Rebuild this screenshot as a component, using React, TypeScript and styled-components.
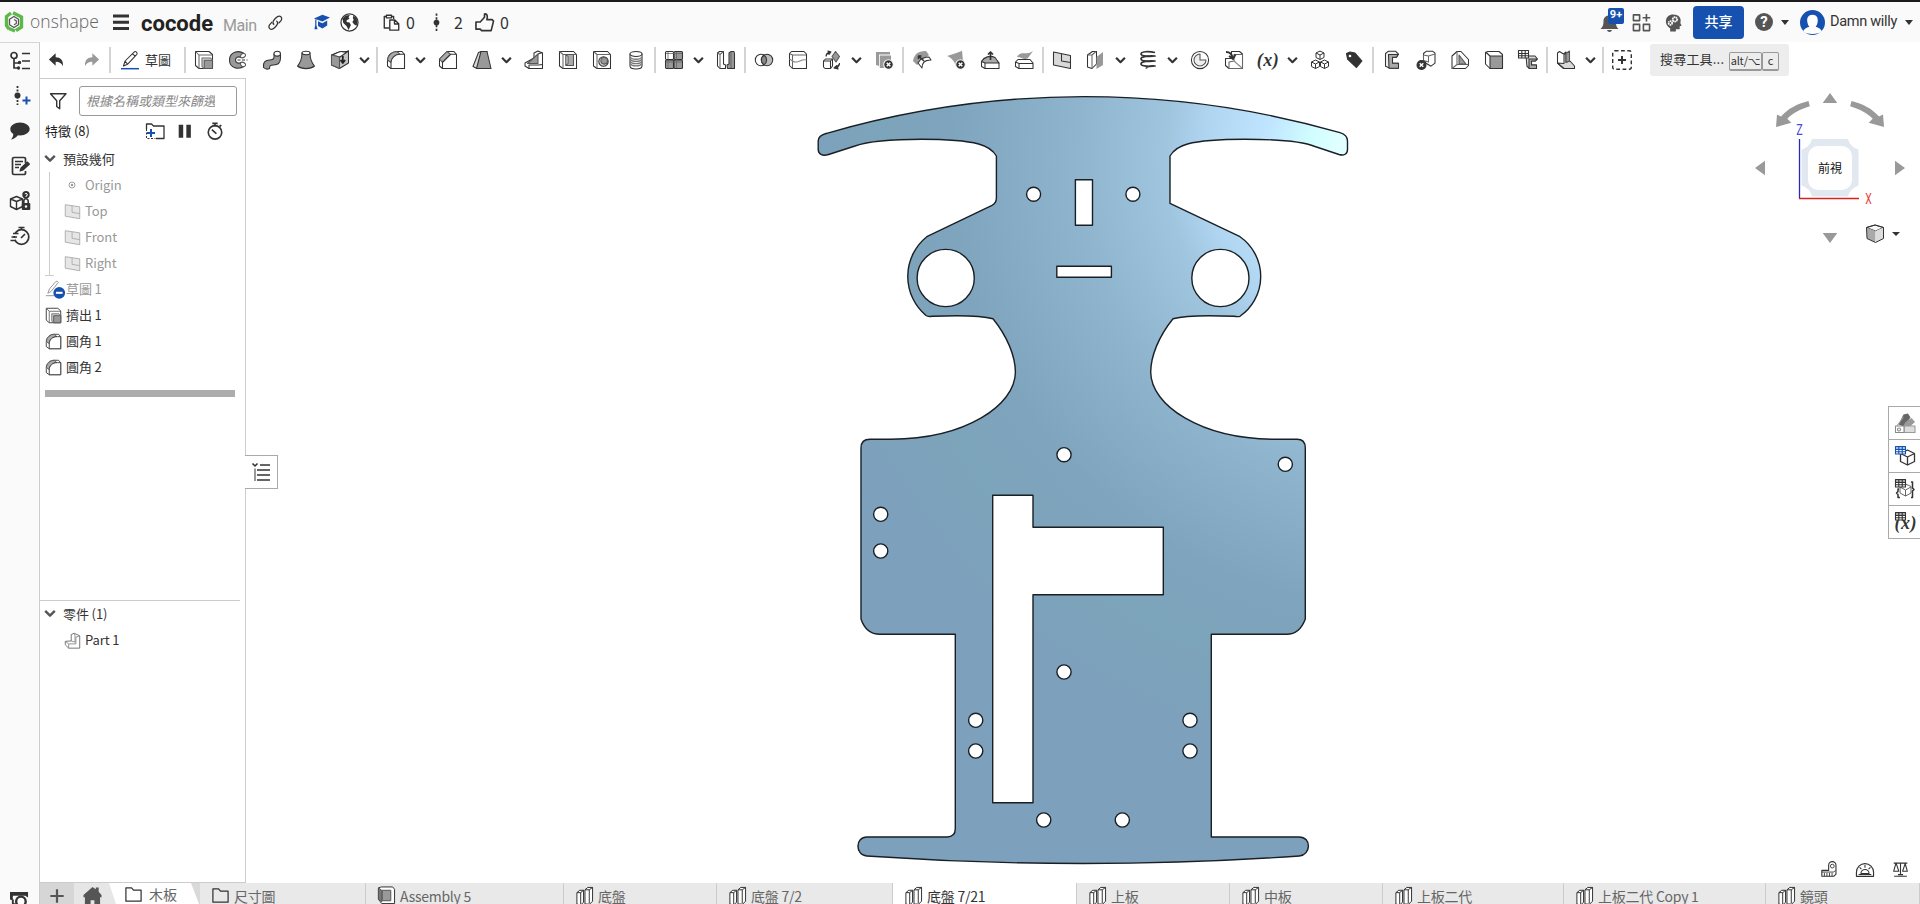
import React from 'react';
import styled, { createGlobalStyle } from 'styled-components';

const Global = createGlobalStyle`
  * { box-sizing: border-box; }
  body { margin: 0; background: #fff; overflow: hidden; }
`;

const INK = '#333';
const GREY = '#999';
const PALE = '#d9d9d9';
const BLUE = '#1651b0';

/* ---------- icons ---------- */
const Glyph = styled.svg<{ $w?: number; $h?: number }>`
  width: ${p => p.$w ?? 20}px;
  height: ${p => p.$h ?? p.$w ?? 20}px;
  flex: none;
  display: block;
  fill: none;
  stroke: ${INK};
  stroke-width: 1.05;
  stroke-linejoin: round;
  overflow: visible;
`;

const table = (color: string, light: string) => (
  <g strokeWidth="1.1" stroke={color}>
    <path fill={light} d="M.5.500h10v3H.5z" />
    <path fill="#fff" d="M.5 3.500h10v4.500H.5z" />
    <path d="M3.800.5v7.500M7.200.5v7.500M.5 5.700h10" />
  </g>
);

const art: Record<string, React.ReactNode> = {
  undo: <path stroke="none" fill={INK} d="M8.500 2.500v4.500c5 0 9 3 8 10-1.300-3.300-3.500-5-8-5v4.500L1 9.500z" />,
  redo: <path stroke="none" fill={GREY} d="M11.500 2.500v4.500c-5 0-9 3-8 10 1.300-3.300 3.500-5 8-5v4.500l7.500-7z" />,
  pencil: <><path fill="#fff" d="M3.500 16l1.600-5L14.300 1.800q1-.8 2.200.3t.3 2.200L7.500 14.300zM12.500 3.700l2.700 2.700M5.100 11L7.500 14.300" /><path stroke={BLUE} strokeWidth="1.500" d="M1 18.700h18" /></>,
  extrude: <><path fill="#fff" d="M1.500 15.500v-14h13.500l3.500 3v14H5z" /><path stroke="#666" d="M5 18.500V5h13.500M1.500 1.500L5 5" /><path stroke="#666" fill={PALE} d="M8 16.500V8h8.500l2 2v8.500H10z" /><path stroke="#555" fill={GREY} d="M10.200 10.200h8.300v8.300h-8.300z" /></>,
  revolve: <><path fill={GREY} d="M16 3.500C11 0 1.500 1.500 1.500 10S11 20 16.500 16l-3.500-3.500c-3 1.500-5.500 0-5.500-2.500s2.500-4 5.500-2.500z" /><path fill="#fff" stroke="#555" d="M12.500 6.500c0-2 1.500-3.500 3.500-3s2 2.500.5 3.500-4 1.500-4-.5zM12.500 13.500c0 2 1.500 3.500 3.500 3s2-2.500.5-3.500-4-1.500-4 .5z" /><path strokeDasharray="3 1.500" d="M9.500 10h10" /></>,
  sweep: <><path fill={GREY} d="M1.500 17.500c-1-5 2-7.500 6-7.500 3.500 0 4.500-1 4.500-3V4h6.500v4c0 5-3 7-7 7-3 0-4 .5-4 3.500-2 1-4.500.5-6-1z" /><ellipse fill="#fff" cx="15.200" cy="3.700" rx="3.300" ry="2.400" /></>,
  loft: <><path fill={GREY} d="M6 3c0 6-1 9-4.500 13 4 3.500 13 3.500 17 0C15 12 14 9 14 3z" /><ellipse fill="#fff" cx="10" cy="3" rx="4" ry="1.700" /></>,
  thicken: <><path fill="#c4c4c4" d="M1.500 5c4-.500 7-4 10-3.500s5 1 7-.5V13L9.500 18.500l-8-3.500z" /><path fill="#fff" d="M1.500 5c4-.500 7-4 10-3.500s5 1 7-.5L10 7z" /><path fill={GREY} stroke="#555" d="M1.500 5L9.500 7v11.500l-8-3.500z" /><path strokeWidth="1.800" stroke="#222" d="M12.800 6v6.500M10.500 10l2.300 3 2.300-3" /></>,
  fillet: <><path fill="#fff" d="M1.500 16v-5C1.500 5 6 1.500 11 1.500h5l2.500 3v14H5z" /><path fill="#aaa" stroke="#555" d="M1.500 10C2 5 6 1.500 11 1.500L14 4.300C9 4.300 5.500 7.500 5 12.500z" /><path d="M5 18.500V13c0-5 3.500-8.700 9.500-8.700h4v14.200z" fill="#fff" /></>,
  chamfer: <><path fill="#fff" d="M1.500 16v-7L9 1.500h7l2.500 3v14H4.500z" /><path fill="#aaa" stroke="#555" d="M1.500 9L9 1.500l3.500 2.800-8 8z" /><path d="M4.500 18.500V12.300l8-8h6" /></>,
  draft: <><path fill={PALE} d="M1 16.500L6.500 2.500 9 1.500h6l-6 17H5z" /><path fill={GREY} d="M9 1.500h6l4 17H4.500z" /></>,
  rib: <><path fill="#fff" d="M1 13l9-5V3l4-2 4.500 2v15.500H5L1 16z" /><path fill={GREY} stroke="#555" d="M3.500 13.500L14 4v9.500z" /><path d="M14 4l4.500-1.500M5 18.500V15h9.500l4-.5" /></>,
  shell: <><path fill="#fff" d="M1.500 16v-14.500h14l3 3v14H5z" /><path stroke="#666" d="M1.500 1.500L5 4.500v14M5 4.500h13.500" /><path fill="#aaa" stroke="#555" d="M8 4.500h7.500v11H8z" /><path fill="#fff" stroke="#555" d="M8 4.500l2 2v7L8 15.500z" /></>,
  hole: <><path fill="#fff" d="M1.500 16v-14.500h14l3 3v14H5z" /><path stroke="#666" d="M1.500 1.500L5 4.500v14M5 4.500h13.500" /><circle fill={PALE} cx="11.500" cy="11.500" r="4.700" /><circle fill={GREY} stroke="#555" cx="12.200" cy="10.800" r="3.300" /></>,
  thread: <><path fill="#fff" d="M4 4v12c0 4 12 4 12 0V4z" /><ellipse fill="#fff" cx="10" cy="4" rx="6" ry="2.500" /><path stroke="#777" strokeWidth="1.300" d="M4 7c2 3 10 3 12 0M4 9.200c2 3 10 3 12 0M4 11.400c2 3 10 3 12 0M4 13.600c2 3 10 3 12 0" /></>,
  pattern: <><rect fill="#fff" x="1.500" y="1.500" width="8" height="8" rx="1" /><rect fill={GREY} x="10" y="1.500" width="8.500" height="8" rx="1" /><rect fill={GREY} x="1.500" y="10" width="8" height="8.500" rx="1" /><rect fill={GREY} x="10" y="10" width="8.500" height="8.500" rx="1" /><path d="M2 3.500h16M4 2v7M12.500 2v16M4 10v8M2 12h16" stroke="#666" strokeWidth=".8" /></>,
  mirror: <><path fill="#fff" d="M1.500 16V3l2-1.500h4V14l2 1v3.500H4z" /><path stroke="#666" d="M4 18.500V4.500l3.500-3M1.500 3L4 4.500" /><path fill={GREY} d="M18.500 4v14.500h-7L11 15l2-1V3l2-1.500h3z" /><path stroke="#666" d="M15 1.500V18" /></>,
  boolean: <><circle fill="#fff" cx="7" cy="10" r="5.700" /><circle fill="#bbb" cx="13" cy="10" r="5.700" /><path fill="#888" d="M10 5.200a5.700 5.700 0 0 1 0 9.600 5.700 5.700 0 0 1 0-9.600z" /></>,
  split: <><path fill="#fff" d="M1.500 15.500V3.500l2-2h12.500l2.500 2.500v14.500H4.500z" /><path stroke="#666" d="M1.500 3.500L4.500 5H18M4.500 5v13.500" /><path stroke="#888" d="M1.500 9l3 2c6 4 8-3 14-1" /></>,
  transform: <><path fill="#fff" d="M1.500 17v-6l2-2h7v7l-2 2.500H3z" /><path d="M1.500 11h7v7.500M8.500 11l2-2" /><path fill={GREY} stroke="#555" d="M13.500 1.500l4 5-3.500 5.500-4-5.500z" /><path fill={INK} d="M4 6.500C4 4 5 3 7 2.500M6 1l3 1-2 2.500zM17.500 13c0 3-1 4-3.500 4.500M15 15.500L12 18l4 1z" /></>,
  deletePart: <><path stroke="none" fill={GREY} d="M2 2h14v2.500H5V16L2 15zM5.800 5.500H17V11h-6v7H5.800z" /><circle fill={INK} cx="14.500" cy="14.500" r="4.800" stroke="#fff" /><path stroke="#fff" strokeWidth="1.500" d="M12.700 12.700l3.600 3.600M16.300 12.700l-3.600 3.600" /></>,
  modifyFillet: <><path stroke="none" fill={GREY} d="M1 11C2 4 7 .5 14 1L17 5 5 15z" /><path fill="#fff" d="M10 18c0-5 2-8 9-8l-2-3c-5 0-6 2-8 2l-3 4z" /><path strokeWidth="1.600" d="M12 11L6.500 6M6.500 9V6h3" /></>,
  deleteFace: <><path stroke="none" fill={GREY} d="M1 6l8-2.500c4-1.500 6-2 7-3L17 11l-7 6C9 12 6 8 1 6z" /><circle fill={INK} cx="14.500" cy="14.500" r="4.800" stroke="#fff" /><path stroke="#fff" strokeWidth="1.500" d="M12.700 12.700l3.600 3.600M16.300 12.700l-3.600 3.600" /></>,
  moveFace: <><path fill="#fff" d="M1.500 11.500L5 9h10l4 4v5.500H5l-3.500-2z" /><path fill="#aaa" d="M1.500 11.500C4 7 10 5 15 7.500L19 13H5z" /><path d="M5 13v5.500" /><path strokeWidth="1.700" d="M10.500 10V2M8 4.500L10.500 2 13 4.500" /></>,
  replaceFace: <><path stroke="none" fill={GREY} d="M3 7c4-7 9-1 16-6l-5 7c-4 3-6-1-11-1z" /><path fill="#fff" d="M1.500 12L4 9.500h12l3 3.500v5.500H5l-3.500-2z" /><path d="M1.500 12L5 13.500h14M5 13.500v5" /></>,
  plane: <><path fill={PALE} d="M1.500 2l17 3.500v13l-17-3.500z" /><path d="M9.500 4v7l9 1.500" /></>,
  frame: <><path fill="#fff" d="M1.500 17V5l5-3.500h4V14L6 18.500z" /><path stroke="#666" d="M6 18V5l4-3.500M1.500 5H6" /><path stroke="none" fill={GREY} d="M10.500 7l6.500-5v13l-6.500 4z" /></>,
  helix: <><g strokeWidth="1.700"><path d="M17 2.500C10 1 3 1.500 3 4s9 2.500 14 2C10 5.500 3 6.500 3 9s9 2.500 14 2C10 10.500 3 11.500 3 14s9 2.500 14 2c-3-.5-8 0-9 2.500" /></g></>,
  clock: <><circle cx="10" cy="10" r="8.600" fill="#fff" /><path fill="#eee" stroke="#555" d="M10 4a6 6 0 1 0 6 6h-6z" /></>,
  derive: <><path fill="#fff" d="M1.500 15.500V8.500h6V1.500h8l3 2.500v14.500H5z" /><path fill="#fff" stroke="#666" d="M5 18.500V12l5-1V4.500h8.500v14z" /><path stroke="#888" d="M10 11l8 7" /><path strokeWidth="1.900" d="M2 2c4 0 6 2 6.500 6M5 6l4 3 2.500-4.500" /></>,
  cubes: <><g fill="#fff" strokeWidth="1"><path d="M10 1l4 2v4.500l-4 2-4-2V3zM6 3l4 2 4-2M10 5v4.500" /><path d="M5.500 10l4 2v4.500l-4 2-4-2V12zM1.500 12l4 2 4-2M5.500 14v4.500" /><path d="M14.500 10l4 2v4.500l-4 2-4-2V12zM10.500 12l4 2 4-2M14.500 14v4.500" /></g></>,
  tag: <><path fill={INK} d="M2.500 3.500L6 2l5 1 7 8-5.500 6.500L3.500 9z" /><circle cx="6" cy="6" r="1.300" fill="#fff" stroke="none" /></>,
  sheet1: <><path fill="#eee" d="M3.500 3.500l3-2.300h7l3 3-2 3h-4v6h6v5H8l-4.500-2z" /><path fill="#aaa" d="M6.500 4.500h9.500l-1.500 2.700h-4v6h6v5h-9.500z" /></>,
  sheet2: <><path fill="#fff" d="M7.500 8V3.500l3-2.300h6l2.500 2v10l-4 3-5-3z" /><path fill="#fff" stroke="#666" d="M7.500 5L12.500 6V12L7.500 10.500zM12.500 6L19 4" /><circle cx="5.500" cy="15" r="4.500" fill={INK} /><path stroke="#fff" strokeWidth="1.400" d="M3.700 13.200l3.600 3.600M7.300 13.200l-3.600 3.600" /></>,
  sheet3: <><path fill="#fff" d="M2 18.500V6l5-4.500h4l7.500 8v6l-3 3z" /><path stroke="#666" d="M7 1.500v13h11.500M2 18.500l5-4" /><path fill={GREY} stroke="#555" d="M9 5l7 9H9z" /></>,
  sheet4: <><path fill="#fff" d="M1.500 14V2.500l2.500-1h11l3.500 3V18.500H6z" /><path fill={GREY} d="M6 6h12.500v12.500H6z" /><path d="M1.500 2L6 6" /></>,
  sheet5: <><path fill={PALE} d="M8 6h9l2.500 3-2 2h-4v4h5v3.500h-6.500l-3-2z" /><path fill="#aaa" d="M11 9h8l-1.500 2h-4v4h5v3.500H11z" />{table(INK, '#fff')}</>,
  bend: <><path fill="#fff" d="M1.500 13V3l2-1.500 4 2.500 2.500-2V13l-2.500 5.500z" /><path fill={PALE} d="M8 13.500V5l2-2v9l4-1 4.500 5v2.500H8l-6.500-5.500z" /><path fill={GREY} stroke="#555" d="M10 12.500V3.500L13.500 1v10z" /></>,
  addTool: <><rect x=".7" y=".7" width="18.600" height="18.600" rx="2" strokeDasharray="3.800 2.500" strokeWidth="1.400" /><path strokeWidth="2" d="M10 6v8M6 10h8" /></>,
  tree: <><circle cx="4" cy="4.500" r="3" strokeWidth="1.700" /><path strokeWidth="1.700" d="M4 7.500v9.500h5M4 12h5M12 2.500h8M12 10h8M12 17.500h8" /><circle cx="9.500" cy="11.500" r="1.200" fill={INK} /><circle cx="8.500" cy="17" r="1.200" fill={INK} /></>,
  version: <><circle cx="7.500" cy="9.500" r="3" fill={INK} stroke="none" /><path strokeWidth="1.800" strokeDasharray="2 1.500" d="M7.500 0v19" /><path stroke={BLUE} strokeWidth="2" d="M16.500 10.500v8M12.500 14.500h8" /></>,
  comment: <path fill={INK} stroke="none" d="M10 1.500c5.500 0 9.700 3 9.700 6.500S15.500 14.500 10 14.500l-2-.2C6 16.500 4 18 1 18.500 2.500 17 3.300 15 3.300 13 1.500 12 .3 10 .3 8 .3 4.500 4.500 1.500 10 1.500z" />,
  note: <><path strokeWidth="1.700" d="M15.500 7V3a1.500 1.500 0 0 0-1.500-1.500H4A1.500 1.500 0 0 0 2.500 3v14A1.500 1.500 0 0 0 4 18.500h10a1.500 1.500 0 0 0 1.500-1.500v-2M5 5.500h8M5 8.500h6M5 11.500h4" /><path fill={INK} d="M10 15l1-3 6.500-6 2 2L13 14z" /></>,
  cubeLock: <><path fill="#fff" strokeWidth="1.400" d="M6.500 5.500l6 2.500v7.500l-6 3-6-3V8zM.5 8l6 2.500L12.500 8M6.500 10.500v8" /><circle cx="16" cy="3.700" r="3.700" fill={INK} stroke="none" /><path stroke="#fff" strokeWidth="1" d="M14.800 3q1.200-1.500 2.300 0t-1.100 2v1" /><path strokeWidth="1.600" d="M13.800 12v-2a2.200 2.200 0 0 1 4.400 0v2" /><rect x="11.800" y="12" width="8.500" height="7" rx="1" fill={INK} stroke="none" /><circle cx="16" cy="15.500" r="1.200" fill="#fff" stroke="none" /></>,
  timer: <><circle cx="11.500" cy="11" r="7.300" strokeWidth="1.700" /><path strokeWidth="1.700" d="M8.500 1.500h6M11.500 1.500V4M11 12l4-4" /><path stroke="#fafafa" strokeWidth="2" d="M1 9h6M0 13h5.500" /><path strokeWidth="1.500" d="M3 7.500h5.500M1.500 11h5.500M.5 14.500h5" /></>,
  camera: <><path fill={INK} stroke="none" d="M0 2h19v6l-3-2H3v5l-3-1z" /><circle cx="11.500" cy="12" r="5" fill="#fff" strokeWidth="2.500" /><path strokeWidth="2" d="M15 16l4 4M3 10v5h3" /></>,
  filter: <path d="M2.500 2.800h15.500l-6.300 7v8l-3-2.300v-5.700z" strokeWidth="1.400" />,
  folderAdd: <><path d="M1.500 8V3h5l2 2h10.500v12.500h-8" strokeWidth="1.300" /><path strokeDasharray="2 1.500" d="M1.500 8v9.500h9" /><path stroke={BLUE} strokeWidth="2" d="M6 8v8M2 12h8" /></>,
  pause: <path fill={INK} stroke="none" d="M3 3h5v14.500H3zM11.500 3h5v14.500h-5z" />,
  stopwatch: <><circle cx="10" cy="11.500" r="7.500" strokeWidth="1.800" /><path strokeWidth="1.800" d="M7 1.500h6M10 2v3M15 5l2-1.500M10.500 12L6.500 8.500M10.500 12l1 1" /></>,
  origin: <><circle cx="10" cy="10" r="3.300" stroke={GREY} /><circle cx="10" cy="10" r="1.300" fill={GREY} stroke="none" /></>,
  planeSoft: <g stroke="#aaa"><path fill="#e6e6e6" d="M1.500 2l17 2.500v14l-17-3z" /><path d="M9.500 3.500v7.500l9 1.500" /></g>,
  sketchOff: <><path stroke={GREY} fill="#fff" d="M3 14l1.600-4.500L11.500 1.500q1.500-.8 2.500 1L6.500 12zM1 16.500h9" /><circle cx="15" cy="13.500" r="6.200" fill={BLUE} stroke="none" /><path stroke="#fff" strokeWidth="2.200" d="M11.500 13.500h7" /></>,
  part: <g stroke="#666"><path fill="#fff" d="M1.500 11l7-.5V3l3.500-1.500 6.500 3v14.500H5.500L1.500 15z" /><path stroke="#888" d="M8.500 10.500L13 12V4.500L12 1.500M5.500 19v-5H14V6l4.500-1.500M1.500 11l4 3" /></g>,
  folder: <path strokeWidth="1.300" d="M2 3h6l2 2.500h8V17H2z" />,
  assembly: <><path fill="#fff" d="M1.500 14V2l3-1h12l2 2.500v15H5z" /><path fill={GREY} stroke="#555" d="M5.500 4.500h9v11h-9z" /><path stroke="#555" fill="#777" d="M1.500 2L5 4.500v12L1.500 14z" /></>,
  studio: <><path fill="#fff" d="M2 19V7l3-2.500h4V17l-3 3zM2 7h4v12M6 7l3-2.500" /><path fill="#fff" d="M10.500 18V4l3-2.500h5V16l-3 3h-5zM10.500 4H15v14M15 4L18.500 1.500" /></>,
  home: <path fill="#555" stroke="none" d="M10 1L.5 9.500V12l1.500-.5V21h6v-6h4v6h6v-9.500l1.500.5V9.500L16.500 6V1.500h-3v2z" />,
  swatches: <><path fill="#666" stroke="none" d="M8.500 1.500l4.500-1 2.500 4-7 9-5-2z" /><path fill="#999" stroke="none" d="M10.500 9l6-4 3.500 4-5 4.500H8z" /><path fill="#ddd" stroke={GREY} d="M9 13h11v6.500H9z" /><path fill="#fff" stroke="#888" d="M.5 13H9v6.500H.5z" /><path stroke={GREY} d="M2 13l6.500-9" /><circle cx="4" cy="16.500" r="1.500" stroke="#888" /></>,
  cubeTable: <><path fill="#fff" strokeWidth="1.300" d="M12.500 4l7 3.500v8l-7 3.500-7-3.500v-8zM5.500 7.500l7 3.500 7-3.500M12.500 11V19" />{table(BLUE, '#9dc4f0')}</>,
  braceTable: <><path fill="#fff" strokeWidth="1" stroke="#666" d="M10.500 5l5.500 2.500V14l-5.500 3L5 14V7.500zM5 8l5.500 3L16 8M10.500 11v6" /><path strokeWidth="1.500" d="M4 10H3v2.500L1.500 14 3 15.500v3h2M16 3h1.500v6L19 10.500 17.500 12v6.500H16" />{table(INK, '#aaa')}</>,
  tape: <><path fill="#fff" strokeWidth="1.300" d="M1 11h8V5a4.300 4.300 0 0 1 8.600 0v10.500L15 18H1z" /><circle cx="13.300" cy="6" r="2.200" /><path d="M1 13h14l2-2M4 14v4M7 14v4M10 14v4M13 14v4" /></>,
  protractor: <><path fill="#fff" strokeWidth="1.300" d="M.5 17v-4.500a9.500 9.500 0 0 1 19 0V17z" /><path strokeWidth="1.200" d="M5.500 14a4.500 4.500 0 0 1 9 0zM3 15h14M10 7.500v-3M6 9L4 7M14 9l2-2" /></>,
  scale: <path strokeWidth="1.300" d="M10 2.500V16M2 2.500h16M4.500 3L2 12h6L5 3M15.500 3L12.500 12h5.500L15.500 3M2.500 18h15M7 16h6" />,
  link: <g strokeWidth="1.500"><path d="M8.500 12.500c-3-2-1-5 1-7s4-4.500 6.500-2.500 1 4.500-1 6.500l-1.500 1.500" /><path d="M11 8c3 2 1 5-1 7s-4 4.500-6.500 2.500-1-4.500 1-6.500L6 9.500" /></g>,
  cap: <path fill={BLUE} stroke="none" d="M0 5.500L10.500 1 20 4.500l-9.500 5zM5 9l5.500 2.500L16.500 8v6.500l-6 3.500L5 15zM1.500 7H3v7l1.500 5H.5l1-5z" />,
  globe: <><circle cx="10" cy="10" r="9" fill="#fff" strokeWidth="1.300" /><path stroke="none" fill={INK} d="M2.500 6L6 2.500l4.500-.5L9 4.500l1 1.500-3 1.500v2l3 .5 1.500 2.500-2.500 5.500-2-4-3.500-3.500zM14 3l3 2 1.500 4-1 4.500-2.500-1.500-2-2.500 1.500-2.500-1-1.500z" /></>,
  paste: <g strokeWidth="1.600"><path d="M7.500 16.500H1.500V3H4M10 3h2.500v3M4 1.500h6v3H4z" /><path fill="#fff" d="M8 7h6l4.500 4.500v7.500H8zM13.500 7v4.800H18.500" /></g>,
  dots: <><circle cx="10" cy="10" r="3" fill={INK} stroke="none" /><path strokeWidth="1.800" strokeDasharray="2.500 1.500" d="M10 .5v19" /></>,
  thumb: <path strokeWidth="1.700" d="M1 9.500h4.500l4.500-5V1c3-.5 3.500 2 2.500 6h5.500l1.500 1.500-2.500 10H7l-1.500-1.500H1z" />,
  bell: <path fill="#555" stroke="none" d="M.5 17c2.500-2.500 3-4.500 3-8 0-3.500 2.500-5.500 6-5.500s6.500 2 6.500 5.500c0 3.500 0 5.500 2.500 8zM7 18h5c-.5 2.500-4.500 2.500-5 0z" />,
  apps: <g stroke="#555" strokeWidth="1.700"><path d="M1.500 2h6.500v6H1.500zM1.500 12h6.500v6.500H1.500zM12 12h6.500v6.500H12zM15.200 1v8M11.200 5h8" /></g>,
  head: <><path fill="#555" stroke="none" d="M6.500 19.500v-3.500C-.5 12 1 1.500 9.500 1.500c7 0 9 4.500 7.700 9L18.500 13.500l-2 .5v3h-4V19.500z" /><g stroke="#fafafa"><circle cx="6.700" cy="10.500" r="1.900" strokeWidth="1.800" strokeDasharray="1.500 .4" /><circle cx="11.500" cy="6.700" r="2.300" strokeWidth="1.900" strokeDasharray="1.700 .4" /></g></>,
};

const Icon = ({ name, size = 20 }: { name: string; size?: number }) => (
  <Glyph $w={size} viewBox="0 0 20 20">{art[name]}</Glyph>
);

/* ---------- shell ---------- */
const Page = styled.div`
  width: 1920px;
  height: 904px;
  display: flex;
  flex-direction: column;
  border-top: 2px solid #1b1b1f;
  overflow: hidden;
  color: ${INK};
  font: 13px/1.2 "Noto Sans CJK TC", "Noto Sans", sans-serif;
  white-space: nowrap;
`;

const Header = styled.header`
  height: 40px;
  flex: none;
  display: flex;
  align-items: center;
  background: #fafafa;
  padding-left: 4px;
`;

const Slot = styled.div<{ $w: number }>`
  width: ${p => p.$w}px;
  flex: none;
  display: flex;
  align-items: center;
`;

const Brand = styled.span`
  font: 300 17.500px/20px "Open Sans", sans-serif;
  color: #666;
  letter-spacing: .1px;
  padding-bottom: 3px;
`;

const DocName = styled.h1`
  margin: 4px 0 0;
  font: 700 22px/24px Roboto, sans-serif;
  color: #222;
`;

const Branch = styled.span`
  font: 16px/20px Roboto, sans-serif;
  letter-spacing: -.4px;
  color: #999;
  margin-top: 7px;
`;

const Count = styled.span`
  font: 16px/20px "Noto Sans CJK TC", sans-serif;
  letter-spacing: -.5px;
  padding-bottom: 1px;
`;

const Spacer = styled.div`flex: 1;`;

const BellBox = styled.div`
  position: relative;
  width: 20px;
  height: 20px;
`;

const Badge = styled.span`
  position: absolute;
  left: 8px;
  top: -4px;
  width: 16px;
  height: 16px;
  border-radius: 2px;
  background: ${BLUE};
  color: #fff;
  font: 700 11px/14px Roboto, sans-serif;
  text-align: center;
`;

const ShareButton = styled.button`
  width: 51px;
  height: 33px;
  border: 0;
  border-radius: 4px;
  padding: 0 0 2px;
  background: ${BLUE};
  color: #fff;
  font: 500 14px/20px "Noto Sans CJK TC", sans-serif;
`;

const Caret = styled.i`
  border: 4px solid transparent;
  border-top: 5px solid ${INK};
  border-bottom: 0;
`;

const Help = styled.span`
  width: 18px;
  height: 18px;
  border-radius: 50%;
  background: #555;
  color: #fff;
  font: 700 15px/18px Roboto, sans-serif;
  text-align: center;
`;

const UserName = styled.span`
  font: 14.500px/20px Roboto, sans-serif;
  letter-spacing: -.3px;
`;

const Body = styled.div`
  flex: 1;
  min-height: 0;
  display: flex;
`;

const Rail = styled.nav`
  width: 40px;
  flex: none;
  display: flex;
  flex-direction: column;
  align-items: center;
  gap: 15px;
  padding-top: 8px;
  background: #fafafa;
  border-top: 1px solid #d6d6d6;
  border-right: 1px solid #ccc;
`;

const RailBottom = styled.div`
  margin-top: auto;
  height: 14px;
`;

const Work = styled.div`
  flex: 1;
  min-width: 0;
  display: flex;
  flex-direction: column;
`;

const Toolbar = styled.div`
  height: 36px;
  flex: none;
  display: flex;
  align-items: center;
`;

const Tool = styled.span`
  width: 34px;
  flex: none;
  display: flex;
  justify-content: center;
`;

const Drop = styled.span`
  width: 18px;
  flex: none;
  display: flex;
  padding-left: 2px;
`;

const Divider = styled.i`
  width: 2px;
  height: 26px;
  flex: none;
  margin: 0 1px;
  background: #d4d4d4;
`;

const SketchTool = styled.span`
  width: 71px;
  flex: none;
  display: flex;
  align-items: center;
  gap: 5px;
  padding-left: 8px;
`;

const Variable = styled.span<{ $size: number }>`
  font: italic 700 ${p => p.$size}px/18px "Liberation Serif", serif;
  letter-spacing: .5px;
`;

const Search = styled.div`
  width: 139px;
  height: 32px;
  margin-left: 11px;
  padding-left: 10px;
  display: flex;
  align-items: center;
  background: #ededed;
  border-radius: 3px;
`;

const SearchText = styled.span`
  width: 69px;
  padding-bottom: 2px;
  letter-spacing: .2px;
`;

const Key = styled.kbd<{ $w: number }>`
  width: ${p => p.$w}px;
  height: 19px;
  margin-top: 2px;
  border: 1px solid #999;
  border-bottom-width: 2px;
  border-radius: 2px;
  font: 11px/15px "Noto Sans CJK TC", "DejaVu Sans", sans-serif;
  letter-spacing: -.2px;
  text-align: center;
`;

const Split = styled.div`
  flex: 1;
  min-height: 0;
  display: flex;
`;

/* ---------- feature panel ---------- */
const Panel = styled.aside`
  width: 206px;
  flex: none;
  display: flex;
  flex-direction: column;
  border: solid #ccc;
  border-width: 1px 1px 1px 0;
  background: #fff;
`;

const FilterRow = styled.div`
  display: flex;
  align-items: center;
  height: 30px;
  margin-top: 7px;
  padding-left: 8px;
`;

const FilterBox = styled.div`
  width: 158px;
  height: 30px;
  margin-left: 11px;
  padding: 0 21px 0 6px;
  border: 1px solid #999;
  border-radius: 3px;
  color: #888;
  font-style: italic;
  line-height: 28px;
`;

const Clip = styled.div`overflow: hidden;`;

const PanelTitle = styled.div`
  display: flex;
  align-items: center;
  height: 30px;
  padding-left: 5px;
  color: #222;
`;

const Tree = styled.div`
  flex: 1;
  display: flex;
  flex-direction: column;
`;

const Row = styled.div<{ $indent: number; $muted?: boolean; $gap?: number }>`
  height: 26px;
  flex: none;
  display: flex;
  align-items: center;
  gap: ${p => p.$gap ?? 4}px;
  padding-left: ${p => p.$indent}px;
  color: ${p => (p.$muted ? '#999' : INK)};
`;

const Label = styled.span`
  padding-bottom: 1px;
  letter-spacing: -.1px;
`;

const Nest = styled.div`
  margin: 0 0 0 9px;
  border-left: 1px solid #ccc;
`;

const NestEnd = styled.div`
  width: 9px;
  height: 1px;
  margin: -1px 0 0 5px;
  background: #ccc;
`;

const Rollback = styled.div`
  height: 7px;
  margin: 10px 10px 0 5px;
  background: #adadad;
`;

const Parts = styled.div`
  height: 282px;
  margin-right: 5px;
  border-top: 1px solid #ccc;
`;

/* ---------- canvas ---------- */
const Canvas = styled.main`
  flex: 1;
  position: relative;
`;

const Drawing = styled.svg`
  display: block;
  width: 1674px;
  height: 805px;
`;

const PanelToggle = styled.div`
  position: absolute;
  left: -1px;
  top: 377px;
  width: 33px;
  height: 34px;
  display: flex;
  align-items: center;
  padding-left: 6px;
  border: 1px solid #aaa;
  border-left: 0;
  background: #fff;
`;

const ViewCube = styled.svg`
  position: absolute;
  right: 0;
  top: 2px;
  width: 190px;
  height: 180px;
`;

const Dock = styled.div`
  position: absolute;
  right: 0;
  top: 328px;
  width: 32px;
  border: solid #aaa;
  border-width: 1px 0 0 1px;
  background: #fff;
`;

const DockItem = styled.div`
  height: 33px;
  display: flex;
  align-items: center;
  justify-content: center;
  border-bottom: 1px solid #aaa;
`;

const VarTable = styled.div`
  position: relative;
  width: 20px;
  height: 20px;
  padding-top: 2px;
`;

const TableOver = styled.div`
  position: absolute;
  left: 0;
  top: 0;
`;

const Measure = styled.div`
  position: absolute;
  right: 11px;
  bottom: 4px;
  display: flex;
  gap: 18px;
`;

/* ---------- tabs ---------- */
const Tabs = styled.footer`
  height: 21px;
  flex: none;
  display: flex;
  overflow: hidden;
  background: #d9d9d9;
  font-size: 14px;
  color: #666;
`;

const AddTab = styled.div`
  width: 34px;
  display: flex;
  justify-content: center;
  background: #d6d6d6;
  padding-top: 5px;
`;

const HomeTab = styled.div`
  width: 42px;
  padding: 3px 0 0 9px;
  background: #e6e6e6;
`;

const Crumb = styled.div`
  width: 91px;
  margin-left: -7px;
  padding: 2px 0 0 15px;
  display: flex;
  align-items: flex-start;
  gap: 6px;
  line-height: 19px;
  background: #fff;
  clip-path: polygon(0 0, 82px 0, 90px 21px, 90px 21px, 0 21px, 7px 21px);
`;

const Tab = styled.div<{ $w: number; $active?: boolean }>`
  width: ${p => p.$w}px;
  flex: none;
  display: flex;
  gap: 4px;
  padding: 3px 0 0 11px;
  line-height: 20px;
  letter-spacing: -.25px;
  border-right: 1.500px solid #ccc;
  background: ${p => (p.$active ? '#fff' : '#e9e9e9')};
  color: ${p => (p.$active ? INK : '#666')};
`;

const Chevron = ({ w = 11, color = INK }: { w?: number; color?: string }) => (
  <Glyph $w={w} $h={w * 0.6} viewBox="0 0 10 6"><path d="M1 .7l4 4 4-4" strokeWidth="2" stroke={color} /></Glyph>
);

const toolGroups =
  'extrude revolve sweep loft thicken v | fillet v chamfer draft v rib shell hole thread | pattern v mirror | boolean split transform v deletePart | modifyFillet deleteFace moveFace replaceFace | plane frame v helix v clock derive var v cubes tag | sheet1 sheet2 sheet3 sheet4 sheet5 | bend v | addTool'.split(' ');

const tools = toolGroups.map((t, i) => {
  if (t === '|') return <Divider key={i} />;
  if (t === 'v') return <Drop key={i}><Chevron /></Drop>;
  if (t === 'var') return <Tool key={i}><Variable $size={18}>(x)</Variable></Tool>;
  return <Tool key={i}><Icon name={t} /></Tool>;
});

const tabs: [string, string, number, boolean?][] = [
  ['folder', '尺寸圖', 166],
  ['assembly', 'Assembly 5', 198],
  ['studio', '底盤', 153],
  ['studio', '底盤 7/2', 176],
  ['studio', '底盤 7/21', 184, true],
  ['studio', '上板', 153],
  ['studio', '中板', 153],
  ['studio', '上板二代', 181],
  ['studio', '上板二代 Copy 1', 202],
  ['studio', '鏡頭', 154],
];

const outline =
  'M826.800 133.300A924 924 0 0 1 1340 132.700Q1347.500 135 1347.500 141V149.500C1347.500 154 1344 156 1339 154.500L1315 146.500C1305 142.500 1285 139.300 1244.600 139.300C1215 139.300 1197 141.500 1187.500 144C1178 146.500 1173 151 1170 156V203.300L1240 236.700A48.600 48.600 0 0 1 1240 316.300Q1238 317 1234 316.300C1205 315 1185 315.500 1173 318.700C1159 336 1150.700 356 1150.700 372.300C1151 405 1200 439 1275 439.300H1297Q1305.300 439.300 1305.300 448V619C1302 628 1296 634.300 1286.700 634.300H1211.300V837H1299C1312 837 1311 855 1299.300 856A3123 3123 0 0 1 866.700 856C855 855 855 837 867 837H947Q955.300 837 955.300 828.500V634.300H880C870 634.300 864 628 861 619V448Q861 439.300 870 439.300H891C966 439 1015.200 405 1015.400 372.300C1015.400 356 1007 336 993 318.700C981 315.500 961 315 932 316.300Q928 317 926 315.500A51 51 0 0 1 926.800 236.700L992 205.300Q996.400 203 996.400 198V156C993.500 151 988 146.500 978.600 144C969 141.500 951 139.300 921.400 139.300C881 139.300 865 142.500 855 146L828.600 154.500C822 156.500 818.200 154 818.200 149.500V141Q818.200 135.500 826.800 133.300Z' +
  'M1075.400 179.700V225.300H1092.500V179.700ZM1056.800 266.300V277.300H1111.400V266.300ZM992.700 495.300V802.700H1033V594.700H1163.300V527.300H1033V495.300Z';

const holes: [number, number, number][] = [
  [945.7, 278, 28.6], [1220.4, 278, 28.6], [1033.6, 194.3, 7], [1132.9, 194.3, 7],
  [1064, 454.7, 7.1], [1285.3, 464.3, 7.1], [880.7, 514.3, 7.1], [880.7, 551, 7.1],
  [1064, 672, 7.1], [975.7, 720.3, 7.1], [975.7, 751, 7.1], [1190, 720.3, 7.1],
  [1190, 751, 7.1], [1043.7, 820, 7.1], [1122.3, 820, 7.1],
];

export default function App() {
  return (
    <Page>
      <Global />
      <Header>
        <Slot $w={26}>
          <Glyph $w={20} $h={22} viewBox="0 0 20 22">
            <path stroke="#5cb947" strokeWidth="3.400" strokeLinejoin="miter" d="M7 2L2.500 5.500v9L5 18M9 1.800l8.500 4.200v10L12 19.500M5 17.500l6 2.500" />
            <path stroke="#555" strokeWidth="1.300" d="M10 5.500l4.500 2.700v5.500L10 16.500l-4.500-2.800V8.200z" />
            <path stroke="#555" strokeWidth="1.200" d="M10 8.500l2.300 1.300v2.600L10 13.700" />
          </Glyph>
        </Slot>
        <Slot $w={83}><Brand>onshape</Brand></Slot>
        <Slot $w={28}>
          <Glyph $w={16} viewBox="0 0 16 16"><path strokeWidth="3" d="M0 2h16M0 8.300h16M0 14.600h16" /></Glyph>
        </Slot>
        <Slot $w={82}><DocName>cocode</DocName></Slot>
        <Slot $w={44}><Branch>Main</Branch></Slot>
        <Slot $w={47}><Icon name="link" size={17} /></Slot>
        <Slot $w={26}><Icon name="cap" size={16} /></Slot>
        <Slot $w={43}><Icon name="globe" size={19} /></Slot>
        <Slot $w={23}><Icon name="paste" size={17} /></Slot>
        <Slot $w={21}><Count>0</Count></Slot>
        <Slot $w={27}><Icon name="dots" size={19} /></Slot>
        <Slot $w={21}><Count>2</Count></Slot>
        <Slot $w={25}><Icon name="thumb" size={19} /></Slot>
        <Count>0</Count>
        <Spacer />
        <Slot $w={32}><BellBox><Icon name="bell" /><Badge>9+</Badge></BellBox></Slot>
        <Slot $w={32}><Icon name="apps" size={19} /></Slot>
        <Slot $w={29}><Icon name="head" size={19} /></Slot>
        <Slot $w={62}><ShareButton>共享</ShareButton></Slot>
        <Slot $w={26}><Help>?</Help></Slot>
        <Slot $w={19}><Caret /></Slot>
        <Slot $w={30}>
          <Glyph $w={25} viewBox="0 0 24 24">
            <circle cx="12" cy="12" r="12" fill={BLUE} stroke="none" />
            <path fill="#fff" stroke="none" d="M12 4.500c4 0 5.500 3 5 6.500-.3 2.500-1 4-2 5 3 1 5 2 6 4.500C18 24 6 24 3 20.500 4 18 6 17 9 16c-1-1-1.700-2.500-2-5-.5-3.500 1-6.500 5-6.500z" />
          </Glyph>
        </Slot>
        <Slot $w={75}><UserName>Damn willy</UserName></Slot>
        <Slot $w={15}><Caret /></Slot>
      </Header>

      <Body>
        <Rail>
          {['tree', 'version', 'comment', 'note', 'cubeLock', 'timer'].map(n => <Icon key={n} name={n} />)}
          <RailBottom><Icon name="camera" size={19} /></RailBottom>
        </Rail>

        <Work>
          <Toolbar>
            <Tool><Icon name="undo" size={18} /></Tool>
            <Tool><Icon name="redo" size={18} /></Tool>
            <Divider />
            <SketchTool><Icon name="pencil" /><Label>草圖</Label></SketchTool>
            <Divider />
            {tools}
            <Search>
              <SearchText>搜尋工具...</SearchText>
              <Key $w={33}>alt/⌥</Key>
              <Key $w={17}>c</Key>
            </Search>
          </Toolbar>

          <Split>
            <Panel>
              <FilterRow>
                <Icon name="filter" />
                <FilterBox><Clip>根據名稱或類型來篩選</Clip></FilterBox>
              </FilterRow>
              <PanelTitle>
                <Slot $w={100}>特徵 (8)</Slot>
                <Slot $w={31}><Icon name="folderAdd" /></Slot>
                <Slot $w={30}><Icon name="pause" size={18} /></Slot>
                <Icon name="stopwatch" size={18} />
              </PanelTitle>
              <Tree>
                <Row $indent={4} $gap={7}><Chevron w={12} color="#555" /><Label>預設幾何</Label></Row>
                <Nest>
                  <Row $indent={13} $muted><Icon name="origin" size={18} /><Label>Origin</Label></Row>
                  {['Top', 'Front', 'Right'].map(n => (
                    <Row key={n} $indent={14} $muted><Icon name="planeSoft" size={17} /><Label>{n}</Label></Row>
                  ))}
                </Nest>
                <NestEnd />
                <Row $indent={5} $gap={2} $muted><Icon name="sketchOff" size={19} /><Label>草圖 1</Label></Row>
                <Row $indent={5}><Icon name="extrude" size={17} /><Label>擠出 1</Label></Row>
                <Row $indent={5}><Icon name="fillet" size={17} /><Label>圓角 1</Label></Row>
                <Row $indent={5}><Icon name="fillet" size={17} /><Label>圓角 2</Label></Row>
                <Rollback />
              </Tree>
              <Parts>
                <Row $indent={4} $gap={7}><Chevron w={12} color="#555" /><Label>零件 (1)</Label></Row>
                <Row $indent={24}><Icon name="part" size={17} /><Label>Part 1</Label></Row>
              </Parts>
            </Panel>

            <Canvas>
              <Drawing viewBox="246 78 1674 805">
                <defs>
                  <radialGradient id="sheen" gradientUnits="userSpaceOnUse" cx="1400" cy="160" r="600">
                    <stop offset=".1" stopColor="#e2ffff" />
                    <stop offset=".155" stopColor="#d0fdff" />
                    <stop offset=".225" stopColor="#bfe5ff" />
                    <stop offset=".33" stopColor="#afd4f0" />
                    <stop offset=".39" stopColor="#a0c5df" />
                    <stop offset=".54" stopColor="#8fb4ce" />
                    <stop offset=".75" stopColor="#7fa4be" />
                    <stop offset=".87" stopColor="#7ca4ba" />
                    <stop offset="1" stopColor="#7da1bc" />
                  </radialGradient>
                </defs>
                <path d={outline} fill="url(#sheen)" stroke="#1a1f24" strokeWidth="1.400" strokeLinejoin="round" />
                {holes.map(([x, y, r], i) => (
                  <circle key={i} cx={x} cy={y} r={r} fill="#fff" stroke="#1a1f24" strokeWidth="1.400" />
                ))}
              </Drawing>

              <PanelToggle>
                <Glyph $w={20} viewBox="0 0 20 20"><path strokeWidth="1.300" d="M9 3h10M6 8h13M6 13h13M6 18h13" /><path strokeWidth="1.600" d="M1.500 1.500L4 4l2.500-2.500" /><path stroke={GREY} strokeWidth="2" d="M4 6.500V19" /></Glyph>
              </PanelToggle>

              <ViewCube viewBox="1730 80 190 180">
                <g fill={GREY}>
                  <path d="M1830 93l7.300 10h-14.600zM1830 243l7.300-10h-14.600zM1755 168l10-7.300v14.600zM1905 168l-10-7.300v14.600z" />
                  <path d="M1808.500 101l1.300 5.300c-10 3-16.500 6.500-22.500 12.500l4 4L1776 127l1-12.500 4 2c7-8 16-12.500 27.500-15.500zM1851.500 101l-1.300 5.300c10 3 16.500 6.500 22.500 12.500l-4 4L1884 127l-1-12.500-4 2c-7-8-16-12.500-27.500-15.500z" />
                </g>
                <path fill="#e1e8ef" d="M1812 139h36q2 8 10.500 10.500v36q-8 2.500-10.500 11h-36q-2-8.500-10.500-11v-36q8.500-2.500 10.500-10.500z" />
                <rect x="1808" y="146" width="44" height="44" rx="10" fill="#fff" />
                <path stroke="#2a2ab8" strokeWidth="1.300" d="M1799.500 139v59.500" />
                <path stroke="#d82222" strokeWidth="1.300" d="M1799 198.500h60" />
                <text x="1830" y="173" textAnchor="middle" fontSize="12" fill="#111">前視</text>
                <text x="1799.500" y="134.500" textAnchor="middle" fontSize="14" fontFamily="Roboto" fill="#4a4ae0" textLength="6.500" lengthAdjust="spacingAndGlyphs">Z</text>
                <text x="1868.500" y="203.500" textAnchor="middle" fontSize="14" fontFamily="Roboto" fill="#e84040" textLength="6.500" lengthAdjust="spacingAndGlyphs">X</text>
                <g stroke="#333" strokeLinejoin="round">
                  <path fill="#f8f8f8" d="M1866.500 227.500l8.500-2.500 8.500 2.500-8 3.500z" />
                  <path stroke="none" fill="#aaa" d="M1866.500 227.500l9 3.500v11.500l-8.500-4z" />
                  <path stroke="none" fill="#ddd" d="M1875.500 231l8-3.500v11l-8 4z" />
                  <path fill="none" d="M1866.500 227.500l8.500-2.500 8.500 2.500v11l-8 4-8.500-4z" />
                </g>
                <path fill={INK} d="M1892 232h8l-4 4z" />
              </ViewCube>

              <Dock>
                <DockItem><Icon name="swatches" /></DockItem>
                <DockItem><Icon name="cubeTable" /></DockItem>
                <DockItem><Icon name="braceTable" /></DockItem>
                <DockItem>
                  <VarTable>
                    <Variable $size={18}>(x)</Variable>
                    <TableOver><Glyph $w={20} viewBox="0 0 20 20">{table(INK, '#aaa')}</Glyph></TableOver>
                  </VarTable>
                </DockItem>
              </Dock>

              <Measure>
                <Icon name="tape" size={17} />
                <Icon name="protractor" size={18} />
                <Icon name="scale" size={17} />
              </Measure>
            </Canvas>
          </Split>

          <Tabs>
            <AddTab><Glyph $w={16} viewBox="0 0 18 18"><path stroke="#555" strokeWidth="2.500" d="M9 1.500v15M1.500 9h15" /></Glyph></AddTab>
            <HomeTab><Icon name="home" size={19} /></HomeTab>
            <Crumb><Icon name="folder" size={19} />木板</Crumb>
            {tabs.map(([icon, text, w, active]) => (
              <Tab key={text} $w={w} $active={active}><Icon name={icon} size={19} />{text}</Tab>
            ))}
          </Tabs>
        </Work>
      </Body>
    </Page>
  );
}
